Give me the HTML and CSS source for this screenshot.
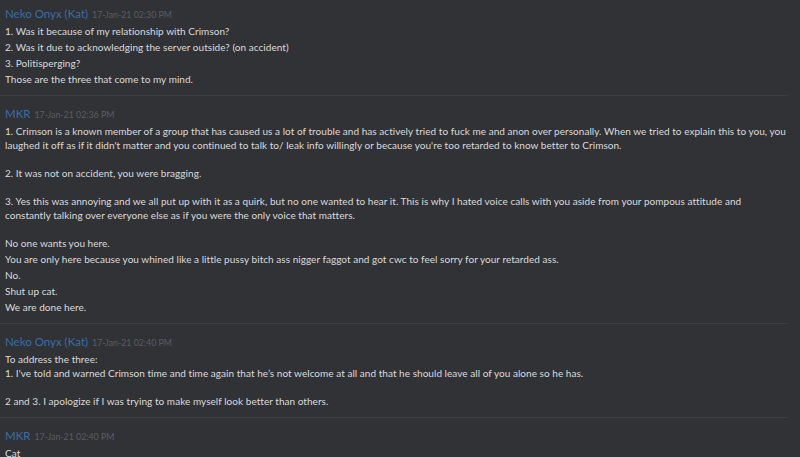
FILE: index.html
```html
<!DOCTYPE html>
<html>
<head>
<meta charset="utf-8">
<link rel="stylesheet" href="styles.css">
</head>
<body>
<div class="log">
  <div class="group">
    <div class="head"><span class="name">Neko Onyx (Kat)</span><span class="time">17-Jan-21 02:30 PM</span></div>
    <div class="msg">1. Was it because of my relationship with Crimson?</div>
    <div class="msg">2. Was it due to acknowledging the server outside? (on accident)</div>
    <div class="msg">3. Politisperging?</div>
    <div class="msg">Those are the three that come to my mind.</div>
  </div>
  <div class="group">
    <div class="head"><span class="name">MKR</span><span class="time">17-Jan-21 02:36 PM</span></div>
    <div class="msg">1. Crimson is a known member of a group that has caused us a lot of trouble and has actively tried to fuck me and anon over personally. When we tried to explain this to you, you
laughed it off as if it didn't matter and you continued to talk to/ leak info willingly or because you're too retarded to know better to Crimson.

2. It was not on accident, you were bragging.

3. Yes this was annoying and we all put up with it as a quirk, but no one wanted to hear it. This is why I hated voice calls with you aside from your pompous attitude and
constantly talking over everyone else as if you were the only voice that matters.

No one wants you here.</div>
    <div class="msg">You are only here because you whined like a little pussy bitch ass nigger faggot and got cwc to feel sorry for your retarded ass.</div>
    <div class="msg">No.</div>
    <div class="msg">Shut up cat.</div>
    <div class="msg">We are done here.</div>
  </div>
  <div class="group">
    <div class="head"><span class="name">Neko Onyx (Kat)</span><span class="time">17-Jan-21 02:40 PM</span></div>
    <div class="msg">To address the three:
1. I've told and warned Crimson time and time again that he’s not welcome at all and that he should leave all of you alone so he has.

2 and 3. I apologize if I was trying to make myself look better than others.</div>
  </div>
  <div class="group">
    <div class="head"><span class="name">MKR</span><span class="time">17-Jan-21 02:40 PM</span></div>
    <div class="msg">Cat</div>
  </div>
</div>
</body>
</html>
```
FILE: styles.css
```css
html, body {
  margin: 0;
  padding: 0;
  background: #313236;
  height: 100%;
  overflow: hidden;
}
body {
  font-family: Lato, "Open Sans", sans-serif;
  color: #dadbdd;
}
.log {
  width: 788px;
  margin-top: -4px;
}
.group {
  padding: 10px 0 9px 5px;
  border-bottom: 1px solid #3b3d42;
}
.head {
  height: 16px;
  line-height: 16px;
  display: flex;
  align-items: baseline;
}
.name {
  font-size: 11.5px;
  color: #3b6ea6;
}
.time {
  font-size: 8.8px;
  color: #5b5e63;
  margin-left: 4px;
}
.msg {
  font-size: 10px;
  letter-spacing: 0.04px;
  line-height: 14px;
  margin-top: 2px;
  white-space: pre;
}
```
